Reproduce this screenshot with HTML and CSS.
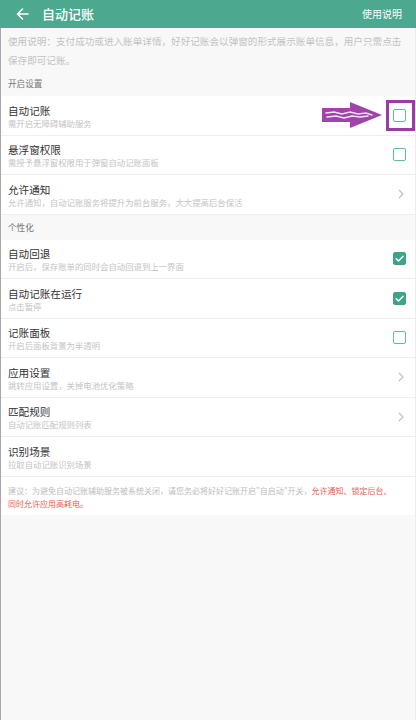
FILE: index.html
```html
<!DOCTYPE html>
<html lang="zh-CN">
<head>
<meta charset="utf-8">
<title>自动记账</title>
<link rel="stylesheet" href="styles.css">
</head>
<body>
<div class="app">
  <header class="topbar">
    <svg class="back" width="13" height="12" viewBox="0 0 13 12"><path d="M12 6H1.5M6.5 1L1.5 6l5 5" fill="none" stroke="#fff" stroke-width="1.6" stroke-linecap="round" stroke-linejoin="round"/></svg>
    <span class="title">自动记账</span>
    <span class="help">使用说明</span>
  </header>
  <main class="content">
    <p class="intro">使用说明：支付成功或进入账单详情，好好记账会以弹窗的形式展示账单信息，用户只需点击<br>保存即可记账。</p>
    <div class="section">开启设置</div>
    <div class="row">
      <div class="texts"><div class="rt">自动记账</div><div class="rs">需开启无障碍辅助服务</div></div>
      <span class="cb"></span>
      <div class="annot">
        <svg class="arrow" width="62" height="28" viewBox="0 0 62 28">
          <polygon points="0,6 28,6 28,0 60,13 28,26 28,20 0,20" fill="#a043aa"/>
          <path d="M4 11 L12 10 L20 12 L28 10 L36 12 L44 11 L50 13 M5 15 L14 14 L22 16 L30 14 L38 15 L46 14" fill="none" stroke="#efe4f1" stroke-width="1.6" stroke-linecap="round"/>
        </svg>
        <div class="box"></div>
      </div>
    </div>
    <div class="row">
      <div class="texts"><div class="rt">悬浮窗权限</div><div class="rs">需授予悬浮窗权限用于弹窗自动记账面板</div></div>
      <span class="cb"></span>
    </div>
    <div class="row">
      <div class="texts"><div class="rt">允许通知</div><div class="rs">允许通知，自动记账服务将提升为前台服务，大大提高后台保活</div></div>
      <svg class="chev" width="6" height="10" viewBox="0 0 6 10"><path d="M1 1l4 4-4 4" fill="none" stroke="#bdbdbd" stroke-width="1.1"/></svg>
    </div>
    <div class="section">个性化</div>
    <div class="row">
      <div class="texts"><div class="rt">自动回退</div><div class="rs">开启后，保存账单的同时会自动回退到上一界面</div></div>
      <span class="cb on"><svg width="13" height="13" viewBox="0 0 13 13"><path d="M3.2 6.8l2.3 2.2 4.4-4.6" fill="none" stroke="#fff" stroke-width="1.5" stroke-linecap="round" stroke-linejoin="round"/></svg></span>
    </div>
    <div class="row">
      <div class="texts"><div class="rt">自动记账在运行</div><div class="rs">点击暂停</div></div>
      <span class="cb on"><svg width="13" height="13" viewBox="0 0 13 13"><path d="M3.2 6.8l2.3 2.2 4.4-4.6" fill="none" stroke="#fff" stroke-width="1.5" stroke-linecap="round" stroke-linejoin="round"/></svg></span>
    </div>
    <div class="row">
      <div class="texts"><div class="rt">记账面板</div><div class="rs">开启后面板背景为半透明</div></div>
      <span class="cb"></span>
    </div>
    <div class="row">
      <div class="texts"><div class="rt">应用设置</div><div class="rs">跳转应用设置，关掉电池优化策略</div></div>
      <svg class="chev" width="6" height="10" viewBox="0 0 6 10"><path d="M1 1l4 4-4 4" fill="none" stroke="#bdbdbd" stroke-width="1.1"/></svg>
    </div>
    <div class="row">
      <div class="texts"><div class="rt">匹配规则</div><div class="rs">自动记账匹配规则列表</div></div>
      <svg class="chev" width="6" height="10" viewBox="0 0 6 10"><path d="M1 1l4 4-4 4" fill="none" stroke="#bdbdbd" stroke-width="1.1"/></svg>
    </div>
    <div class="row">
      <div class="texts"><div class="rt">识别场景</div><div class="rs">拉取自动记账识别场景</div></div>
    </div>
    <p class="tip">建议：为避免自动记账辅助服务被系统关闭，请您务必将好好记账开启"自启动"开关，<span class="red">允许通知、锁定后台、<br>同时允许应用高耗电。</span></p>
  </main>
</div>
</body>
</html>
```
FILE: styles.css
```css
* { box-sizing: border-box; }
html, body { margin: 0; padding: 0; }
body {
  width: 416px;
  height: 720px;
  background: #f8f8f8;
  font-family: "Noto Sans CJK SC", "Noto Sans", sans-serif;
  overflow: hidden;
}
.app { display: flex; flex-direction: column; height: 720px; }
.topbar {
  height: 28px;
  flex: none;
  background: #4ca88f;
  display: flex;
  align-items: center;
  padding: 0 14px 0 16px;
  color: #fff;
}
.back { flex: none; }
.title { margin-left: 13px; font-size: 13px; font-weight: 500; line-height: 28px; }
.help { margin-left: auto; font-size: 10px; line-height: 28px; }
.content {
  flex: 1;
  border-left: 1px solid #a8a8a8;
  border-right: 1px solid #ececec;
  background: #f8f8f8;
}
.intro {
  margin: 0;
  padding: 4px 0 1px 7px;
  font-size: 9.6px;
  line-height: 19px;
  white-space: nowrap;
  color: #c2c2c2;
}
.section {
  height: 25px;
  line-height: 25px;
  padding-left: 7px;
  font-size: 8.6px;
  color: #777;
}
.row {
  position: relative;
  height: 39.5px;
  background: #fff;
  border-bottom: 1px solid #efefef;
  display: flex;
  align-items: center;
  padding: 0 9px 0 7px;
}
.texts { flex: 1; padding-top: 2px; }
.rt { font-size: 10.6px; line-height: 14px; color: #333; }
.rs { font-size: 8.4px; line-height: 11px; color: #c4c4c4; }
.cb {
  flex: none;
  width: 13px;
  height: 13px;
  border: 1.6px solid #5bbc9f;
  border-radius: 2px;
  display: flex;
  align-items: center;
  justify-content: center;
}
.cb.on { background: #3ea488; border-color: #3ea488; }
.cb.on svg { flex: none; }
.chev { flex: none; margin-right: 2px; }
.annot {
  position: absolute;
  left: 321px;
  top: 4px;
  display: flex;
  align-items: center;
}
.arrow { display: block; }
.box {
  margin-left: 2px;
  width: 29px;
  height: 31px;
  border: 3.5px solid #9c3aa6;
}
.tip {
  margin: 0;
  background: #fff;
  padding: 7px 0 5px 7px;
  font-size: 8px;
  line-height: 13px;
  white-space: nowrap;
  color: #bdbdbd;
}
.red { color: #ec5a52; }
```
